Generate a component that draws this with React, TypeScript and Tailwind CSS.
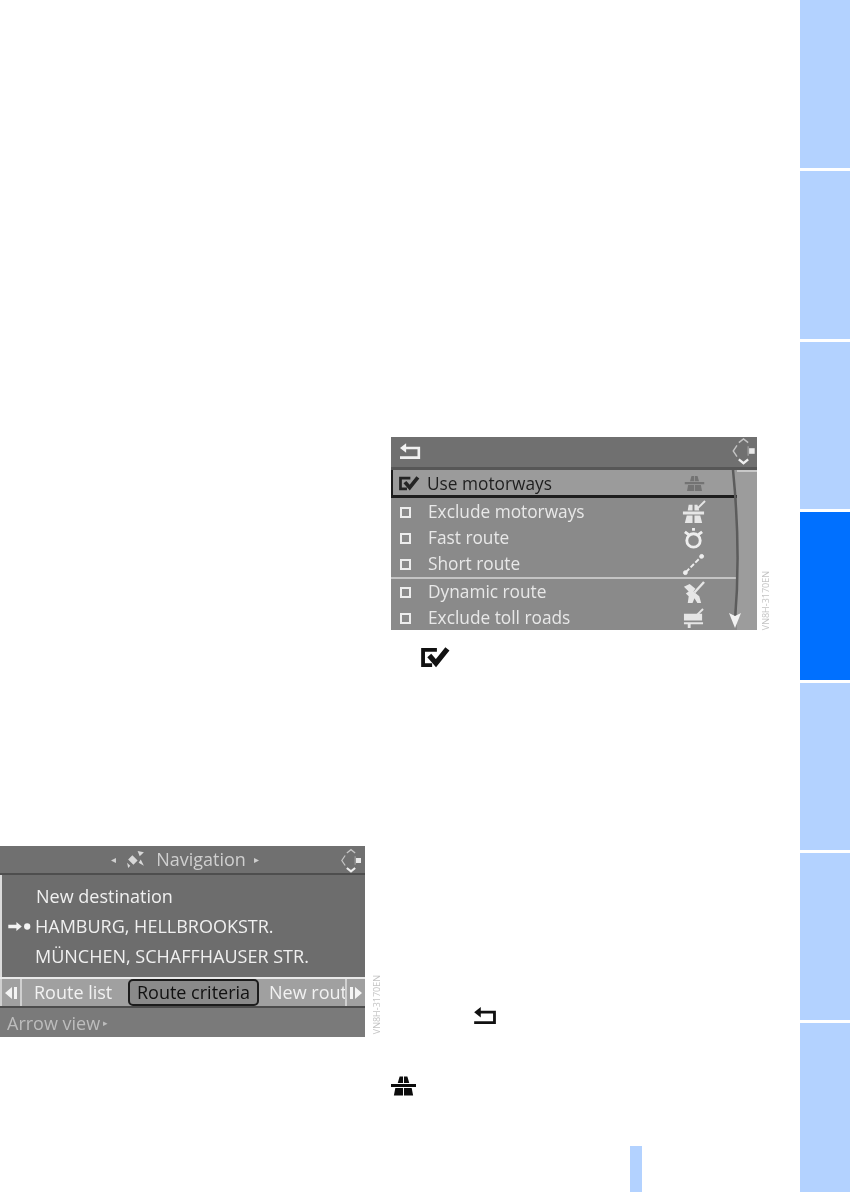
const font = "font-['Open_Sans',sans-serif]"

function BackIcon({ color, className }: { color: string; className?: string }) {
  return (
    <svg viewBox="0 0 24 18" className={className} fill={color}>
      <path d="M7 0v4h16v14H0v-3h20V7H7v4L0 5.500z" />
    </svg>
  )
}

function CheckedIcon({ className, color }: { className?: string; color: string }) {
  return (
    <svg viewBox="0 0 30 22" className={className} fill="none" stroke={color}>
      <path d="M17 3H2.500v16H12" strokeWidth="4" />
      <path d="M9 9l7 8L28 2" strokeWidth="5.500" />
    </svg>
  )
}

function MotorwayIcon({ color, className }: { color: string; className?: string }) {
  return (
    <svg viewBox="0 0 26 20" className={className} fill={color}>
      <path d="M9 0h3.500v7H7zM13.500 0H17l2 7h-5.500zM0 8h26v3H0zM4.500 12H12.500v8H3zM13.500 12h8l1.500 8h-9.500z" />
    </svg>
  )
}

function ExcludeIcon() {
  return (
    <svg viewBox="0 0 26 26" className="h-[25px] w-[25px]" fill="#e6e6e6">
      <path d="M8 5h4v6H7zM14 5h3l2 6h-5zM2 12h22v3H2zM6 16h6v8H4zM14 16h6l2 8h-8z" />
      <path d="M17 9L25 1" stroke="#e6e6e6" strokeWidth="2" />
    </svg>
  )
}

function ClockIcon() {
  return (
    <svg viewBox="0 0 24 24" className="h-[23px] w-[23px]" fill="none" stroke="#eeeeee">
      <circle cx="12" cy="14" r="7" strokeWidth="3" />
      <path d="M3 5l4 3M21 5l-4 3M12 1v3" strokeWidth="3" />
    </svg>
  )
}

function ShortIcon() {
  return (
    <svg viewBox="0 0 24 24" className="h-[23px] w-[23px]" fill="#eeeeee" stroke="#eeeeee">
      <path d="M4 20L20 4" strokeWidth="2" strokeDasharray="5 2" />
      <circle cx="3.500" cy="20.500" r="2" />
      <circle cx="20.500" cy="3.500" r="2" />
    </svg>
  )
}

function DynamicIcon() {
  return (
    <svg viewBox="0 0 24 24" className="h-[23px] w-[23px]" fill="#e6e6e6">
      <path d="M2 6l6-3 6 5-2 3 6 5 2 7h-4l-3-5-2 5H6l1-7-3-3 3-2z" />
      <path d="M13 12L23 1" stroke="#e6e6e6" strokeWidth="2.500" />
    </svg>
  )
}

function TollIcon() {
  return (
    <svg viewBox="0 0 24 22" className="h-[21px] w-[23px]" fill="#e6e6e6">
      <path d="M2 6h19v7H2zM2 15h20v2H2zM6 17h3v4H6z" />
      <path d="M16 7l6-6" stroke="#e6e6e6" strokeWidth="2" />
    </svg>
  )
}

function ControllerIcon({ className }: { className?: string }) {
  return (
    <svg viewBox="0 0 26 30" className={className} fill="none" stroke="#c4c4c4" strokeWidth="1.500">
      <path d="M6 9l-4 6 4 6" />
      <path d="M8 6l5-4 5 4" />
      <path d="M8 24l5 4 5-4" strokeWidth="2.500" stroke="#efefef" />
      <path d="M18 10v10" stroke="#9d9d9d" />
      <rect x="19" y="12" width="6" height="6" fill="#e8e8e8" stroke="none" />
    </svg>
  )
}

function ScrollArrow({ flip }: { flip?: boolean }) {
  return (
    <svg viewBox="0 0 14 14" className={`h-[14px] w-[14px] ${flip ? 'rotate-180' : ''}`} fill="#f4f4f4">
      <path d="M8 1v12L1 7zM10 1h3v12h-3z" />
    </svg>
  )
}

const routeRows = [
  { label: 'Exclude motorways', icon: <ExcludeIcon /> },
  { label: 'Fast route', icon: <ClockIcon /> },
  { label: 'Short route', icon: <ShortIcon /> },
]

function RouteRow({ label, icon }: { label: string; icon: React.ReactNode }) {
  return (
    <div className="flex h-[26px] items-center">
      <span className="ml-[9px] h-[11px] w-[11px] border-2 border-[#ededed]" />
      <span className="ml-[17px] w-[253px] text-[17.300px] text-[#e8e8e8]">{label}</span>
      <span className="flex w-[25px] justify-center">{icon}</span>
    </div>
  )
}

function RouteCriteriaScreen() {
  return (
    <div className={`${font} relative h-[193px] w-[366px] overflow-hidden bg-[#8a8a8a] blur-[0.7px]`}>
      <div className="flex h-[33px] items-center justify-between border-b-[3px] border-[#575757] bg-[#707070] pb-[3px] pl-[9px] pr-[1px]">
        <BackIcon color="#f2f2f2" className="h-[16px] w-[21px]" />
        <ControllerIcon className="h-[28px] w-[25px]" />
      </div>
      <div className="flex">
        <div className="w-[346px]">
          <div className="flex h-[28px] items-center border-b-[3px] border-l-2 border-[#1d1d1d] bg-[#9b9b9b] pt-[2px]">
            <CheckedIcon color="#242424" className="ml-[5px] h-[15px] w-[22px]" />
            <span className="ml-[7px] w-[257px] text-[17.300px] text-[#1f1f1f]">Use motorways</span>
            <MotorwayIcon color="#737373" className="h-[15px] w-[21px]" />
          </div>
          <div className="pt-[1px]">
            {routeRows.map((row) => (
              <RouteRow key={row.label} label={row.label} icon={row.icon} />
            ))}
          </div>
          <div className="border-t-2 border-[#c4c4c4]">
            <RouteRow label="Dynamic route" icon={<DynamicIcon />} />
            <RouteRow label="Exclude toll roads" icon={<TollIcon />} />
          </div>
        </div>
        <div className="flex-1 border-t-2 border-[#c8c8c8] bg-[#9c9c9c]" />
      </div>
      <svg viewBox="0 0 30 160" className="absolute left-[336px] top-[33px] h-[160px] w-[30px]" fill="none">
        <path d="M6 0Q14 80 8 150" stroke="#5c5c5c" strokeWidth="2.500" />
        <path d="M2 143l6 3 6-3-6 15z" fill="#f2f2f2" />
      </svg>
    </div>
  )
}

function NavigationScreen() {
  return (
    <div className={`${font} h-[191px] w-[365px] overflow-hidden bg-[#6d6d6d] blur-[0.7px]`}>
      <div className="relative flex h-[29px] items-center justify-center border-b-2 border-[#4e4e4e] bg-[#707070] pl-[5px] text-[18px] text-[#cfcfcf]">
        <span className="mr-[9px] text-[10px]">◂</span>
        <svg viewBox="0 0 20 20" className="mr-[10px] h-[21px] w-[21px]" fill="#d8d8d8">
          <path d="M7 6l5 5-4 4-5-5zM2 13l3 3-2 2zM12 2l6 1-4 4zM15 10l3 6-5-3z" />
        </svg>
        <span>Navigation</span>
        <span className="ml-[8px] text-[10px]">▸</span>
        <ControllerIcon className="absolute right-[1px] top-[2px] h-[25px] w-[26px]" />
      </div>
      <div className="h-[102px] border-l-2 border-[#dcdcdc] pl-[33px] pt-[6px] text-[18px] leading-[30px] text-[#f0f0f0]">
        <div className="pl-[1px]">New destination</div>
        <div className="relative">
          HAMBURG, HELLBROOKSTR.
          <span className="absolute left-[-28px] top-[11px] flex items-center">
            <svg viewBox="0 0 26 10" className="h-[9px] w-[26px]" fill="#f3f3f3">
              <path d="M0 3h9V0l6 5-6 5V7H0z" />
              <circle cx="21" cy="5" r="3.500" />
            </svg>
          </span>
        </div>
        <div>MÜNCHEN, SCHAFFHAUSER STR.</div>
      </div>
      <div className="flex h-[31px] border-y-2 border-t-[#e9e9e9] border-b-[#4c4c4c] bg-[#a0a0a0] text-[18px] text-[#f2f2f2]">
        <span className="flex w-[22px] items-center justify-center border-x-2 border-[#d0d0d0]">
          <ScrollArrow />
        </span>
        <span className="flex w-[106px] items-center pl-[12px]">Route list</span>
        <span className="flex h-[27px] w-[131px] items-center justify-center rounded-[5px] border-2 border-[#1c1c1c] bg-[#8a8a8a] text-[#111111]">
          Route criteria
        </span>
        <span className="flex w-[86px] items-center whitespace-nowrap pl-[10px]">New rout</span>
        <span className="flex w-[20px] items-center justify-center border-l-2 border-[#d0d0d0]">
          <ScrollArrow flip />
        </span>
      </div>
      <div className="flex h-[29px] items-center bg-[#7a7a7a] pl-[7px] pt-[1px] text-[18px] text-[#bdbdbd]">
        Arrow view
        <span className="ml-[3px] text-[9px]">▸</span>
      </div>
    </div>
  )
}

function Watermark({ text, className }: { text: string; className?: string }) {
  return (
    <div
      className={`${font} text-[9px] leading-[10px] text-[#c4c4c4] blur-[0.5px] [writing-mode:vertical-rl] ${className ?? ''}`}
    >
      {text}
    </div>
  )
}

export default function App() {
  return (
    <div className="flex h-[1192px] w-[850px] overflow-hidden bg-white">
      <main className="flex w-[800px]">
        <section className="flex w-[391px] items-start pt-[846px]">
          <NavigationScreen />
          <Watermark text="VN8H-3170EN" className="ml-[7px] mt-[129px] rotate-180" />
        </section>
        <section className="flex w-[409px] flex-col pt-[437px]">
          <div className="flex items-end">
            <RouteCriteriaScreen />
            <Watermark text="VN8H-3170EN" className="ml-[4px] rotate-180" />
          </div>
          <CheckedIcon color="#111111" className="ml-[29px] mt-[17px] h-[21px] w-[30px]" />
          <BackIcon color="#111111" className="ml-[83px] mt-[339px] h-[17px] w-[23px]" />
          <MotorwayIcon color="#0c0c0c" className="ml-[0px] mt-[52px] h-[20px] w-[25px]" />
          <div className="ml-[239px] mt-[50px] h-[46px] w-[12px] bg-[#b3d2ff]" />
        </section>
      </main>
      <aside className="flex w-[50px] shrink-0 flex-col gap-[3px]">
        <div className="h-[168px] bg-[#b3d2ff]" />
        <div className="h-[168px] bg-[#b3d2ff]" />
        <div className="h-[167px] bg-[#b3d2ff]" />
        <div className="h-[168px] bg-[#0070ff]" />
        <div className="h-[167px] bg-[#b3d2ff]" />
        <div className="h-[167px] bg-[#b3d2ff]" />
        <div className="h-[169px] bg-[#b3d2ff]" />
      </aside>
    </div>
  )
}
